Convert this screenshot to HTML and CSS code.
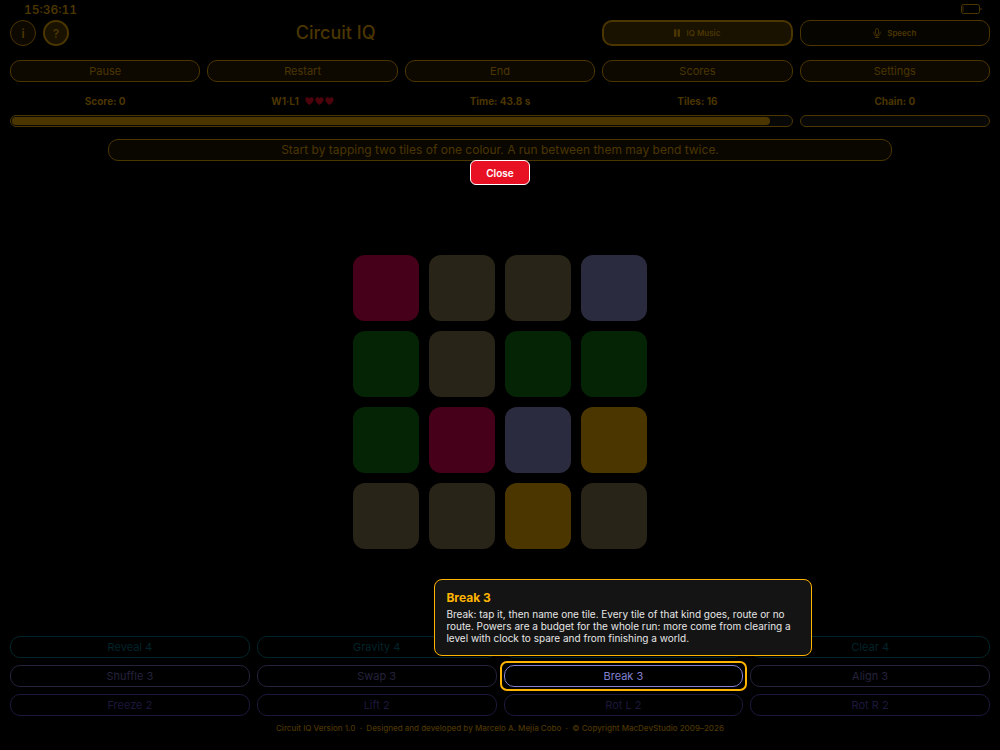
FILE: index.html
```html
<!DOCTYPE html>
<html lang="en">
<head>
  <meta charset="UTF-8">
  <meta name="viewport" content="width=device-width, initial-scale=1.0">
  <title>Circuit IQ</title>
  <link rel="stylesheet" href="styles.css">
</head>
<body>
  <div class="game">
    <div class="status">
      <span class="clock">15:36:11</span>
      <svg class="battery" width="21" height="10" viewBox="0 0 21 10" fill="none" stroke="currentColor">
        <rect x="0.5" y="0.5" width="18" height="9" rx="2" />
        <path d="M2 2v6" stroke-width="0.8" />
        <path d="M20 4v2" />
      </svg>
    </div>

    <header class="top">
      <div class="brand">
        <button class="round" aria-label="Info">i</button>
        <button class="round active" aria-label="Help">?</button>
        <h1>Circuit IQ</h1>
      </div>
      <button class="audio active">
        <svg width="6" height="8" viewBox="0 0 6 8" fill="currentColor">
          <rect width="2.4" height="7.5" y="0.2" rx="0.4" />
          <rect x="3.6" width="2.4" height="7.5" y="0.2" rx="0.4" />
        </svg>
        IQ Music
      </button>
      <button class="audio">
        <svg width="8" height="10" viewBox="0 0 8 10" fill="none" stroke="currentColor" stroke-width="0.8" stroke-linecap="round">
          <rect x="2.5" y="0.5" width="3" height="6" rx="1.5" />
          <path d="M0.8 4v1a3.2 2.9 0 0 0 6.4 0V4M4 7.9v1.6M2.2 9.5h3.6" />
        </svg>
        Speech
      </button>
    </header>

    <nav class="row menu">
      <button>Pause</button>
      <button>Restart</button>
      <button>End</button>
      <button>Scores</button>
      <button>Settings</button>
    </nav>

    <div class="row stats">
      <span>Score: 0</span>
      <span class="level">W1·L1
        <span class="hearts">
          <svg viewBox="0 0 9 8"><path d="M4.5 8C2 6.3 0.3 4.7 0.3 2.6C0.3 1.2 1.3 0.2 2.5 0.2C3.4 0.2 4.1 0.7 4.5 1.4C4.9 0.7 5.6 0.2 6.5 0.2C7.7 0.2 8.7 1.2 8.7 2.6C8.7 4.7 7 6.3 4.5 8Z" /></svg>
          <svg viewBox="0 0 9 8"><path d="M4.5 8C2 6.3 0.3 4.7 0.3 2.6C0.3 1.2 1.3 0.2 2.5 0.2C3.4 0.2 4.1 0.7 4.5 1.4C4.9 0.7 5.6 0.2 6.5 0.2C7.7 0.2 8.7 1.2 8.7 2.6C8.7 4.7 7 6.3 4.5 8Z" /></svg>
          <svg viewBox="0 0 9 8"><path d="M4.5 8C2 6.3 0.3 4.7 0.3 2.6C0.3 1.2 1.3 0.2 2.5 0.2C3.4 0.2 4.1 0.7 4.5 1.4C4.9 0.7 5.6 0.2 6.5 0.2C7.7 0.2 8.7 1.2 8.7 2.6C8.7 4.7 7 6.3 4.5 8Z" /></svg>
        </span>
      </span>
      <span>Time: 43.8 s</span>
      <span>Tiles: 16</span>
      <span>Chain: 0</span>
    </div>

    <div class="row meters">
      <div class="meter time"><div class="fill" style="width: 97.3%"></div></div>
      <div class="meter"></div>
    </div>

    <div class="hint">
      Start by tapping two tiles of one colour. A run between them may bend twice.
      <button class="close">Close</button>
    </div>

    <main class="board">
      <div class="tiles">
        <button class="tile red" aria-label="Red tile"></button>
        <button class="tile sand" aria-label="Sand tile"></button>
        <button class="tile sand" aria-label="Sand tile"></button>
        <button class="tile blue" aria-label="Blue tile"></button>
        <button class="tile green" aria-label="Green tile"></button>
        <button class="tile sand" aria-label="Sand tile"></button>
        <button class="tile green" aria-label="Green tile"></button>
        <button class="tile green" aria-label="Green tile"></button>
        <button class="tile green" aria-label="Green tile"></button>
        <button class="tile red" aria-label="Red tile"></button>
        <button class="tile blue" aria-label="Blue tile"></button>
        <button class="tile gold" aria-label="Gold tile"></button>
        <button class="tile sand" aria-label="Sand tile"></button>
        <button class="tile sand" aria-label="Sand tile"></button>
        <button class="tile gold" aria-label="Gold tile"></button>
        <button class="tile sand" aria-label="Sand tile"></button>
      </div>
    </main>

    <div class="powers">
      <button class="teal">Reveal 4</button>
      <button class="teal">Gravity 4</button>
      <button class="teal" aria-label="Power"></button>
      <button class="teal">Clear 4</button>
      <button class="lilac">Shuffle 3</button>
      <button class="lilac">Swap 3</button>
      <div class="spotlight">
        <button class="lit" aria-describedby="tip">Break 3</button>
        <div class="tip" id="tip" role="tooltip">
          <h2>Break 3</h2>
          <p>Break: tap it, then name one tile. Every tile of that kind goes, route or no route. Powers are a budget for the whole run: more come from clearing a level with clock to spare and from finishing a world.</p>
        </div>
      </div>
      <button class="lilac">Align 3</button>
      <button class="indigo">Freeze 2</button>
      <button class="indigo">Lift 2</button>
      <button class="indigo">Rot L 2</button>
      <button class="indigo">Rot R 2</button>
    </div>

    <footer>Circuit IQ Version 1.0 &nbsp;·&nbsp; Designed and developed by Marcelo A. Mejía Cobo &nbsp;·&nbsp; © Copyright MacDevStudio 2009–2026</footer>
  </div>
</body>
</html>
```
FILE: styles.css
```css
* {
  box-sizing: border-box;
}

body {
  margin: 0;
  background: #000;
  color: #4c3600;
  font-family: Inter, "Liberation Sans", sans-serif;
  font-size: 11px;
}

button {
  margin: 0;
  padding: 0;
  font: inherit;
  color: inherit;
  background: #0d0900;
  border: 1px solid #4c3600;
  border-radius: 10px;
  cursor: pointer;
}

.game {
  display: flex;
  flex-direction: column;
  min-height: 100vh;
  padding: 0 10px;
}

.status {
  display: flex;
  align-items: center;
  justify-content: space-between;
  height: 18px;
  padding: 0 8px 0 14px;
}

.clock {
  font-size: 12px;
  font-weight: 600;
  font-variant-numeric: tabular-nums;
}

.top,
.row {
  display: grid;
  grid-template-columns: repeat(5, 1fr);
  gap: 7px;
}

.top {
  margin-top: 2px;
}

.brand {
  grid-column: span 3;
  display: flex;
  align-items: center;
  gap: 7px;
}

.brand h1 {
  flex: 1;
  margin: 0;
  font-size: 18px;
  font-weight: 500;
  line-height: 26px;
  text-align: center;
}

.round {
  width: 26px;
  height: 26px;
  border-radius: 50%;
  font-size: 12px;
  font-weight: 600;
}

.audio {
  display: flex;
  align-items: center;
  justify-content: center;
  gap: 6px;
  height: 26px;
  font-size: 8px;
  font-weight: 600;
  background: #060500;
}

.active {
  background: #191200;
  border-width: 2px;
}

.menu {
  margin-top: 14px;
}

.menu button {
  height: 22px;
}

.stats {
  margin-top: 12px;
  font-size: 10px;
  font-weight: 700;
  line-height: 14px;
  text-align: center;
}

.level {
  display: flex;
  align-items: center;
  justify-content: center;
  gap: 6px;
}

.hearts {
  display: flex;
  gap: 1px;
}

.hearts svg {
  width: 9px;
  height: 8px;
  fill: #4c030b;
}

.meters {
  margin-top: 7px;
}

.meter {
  height: 12px;
  padding: 1px;
  background: #080808;
  border: 1px solid #4c3600;
  border-radius: 6px;
}

.meter.time {
  grid-column: span 4;
}

.fill {
  height: 8px;
  background: #4c3600;
  border-radius: 4px;
}

.hint {
  position: relative;
  width: 80%;
  margin: 12px auto 0;
  font-size: 12px;
  line-height: 20px;
  text-align: center;
  background: #0a0700;
  border: 1px solid #4c3600;
  border-radius: 10px;
}

.close {
  position: absolute;
  top: 100%;
  left: 50%;
  width: 60px;
  height: 25px;
  transform: translateX(-50%);
  font-size: 10px;
  font-weight: 600;
  color: #fff;
  background: #e81123;
  border-color: #fff;
  border-radius: 6px;
}

.board {
  flex: 1;
  display: flex;
  align-items: center;
  justify-content: center;
  padding-top: 6px;
}

.tiles {
  display: grid;
  grid-template-columns: repeat(4, 66px);
  gap: 10px;
}

.tile {
  height: 66px;
  border: none;
  border-radius: 12px;
}

.red {
  background: #470019;
}

.sand {
  background: #282417;
}

.blue {
  background: #2b2b40;
}

.green {
  background: #052405;
}

.gold {
  background: #4c3600;
}

.powers {
  display: grid;
  grid-template-columns: repeat(4, 1fr);
  gap: 7px;
}

.powers button {
  width: 100%;
  height: 22px;
  background: #000;
  border-color: currentColor;
}

.powers .teal {
  color: #00242b;
}

.powers .lilac {
  color: #25223c;
}

.powers .indigo {
  color: #1c183c;
}

.powers .lit {
  display: block;
  color: #8080d0;
}

.spotlight {
  position: relative;
}

/* gold ring round the highlighted power */
.spotlight::before {
  content: "";
  position: absolute;
  inset: -4px;
  border: 2px solid #ffb400;
  border-radius: 7px;
  pointer-events: none;
}

.tip {
  position: absolute;
  bottom: calc(100% + 9px);
  left: 50%;
  width: 378px;
  padding: 10px 11px;
  transform: translateX(-50%);
  color: #e6e6e6;
  background: #141414;
  border: 1px solid #ffb400;
  border-radius: 8px;
}

.tip h2 {
  margin: 0 0 2px;
  font-size: 12px;
  font-weight: 700;
  line-height: 16px;
  color: #ffb400;
}

.tip p {
  margin: 0;
  padding-bottom: 1px;
  font-size: 10px;
  line-height: 12px;
}

footer {
  padding: 6px 0 16px;
  font-size: 8px;
  font-weight: 500;
  line-height: 12px;
  text-align: center;
}
```
